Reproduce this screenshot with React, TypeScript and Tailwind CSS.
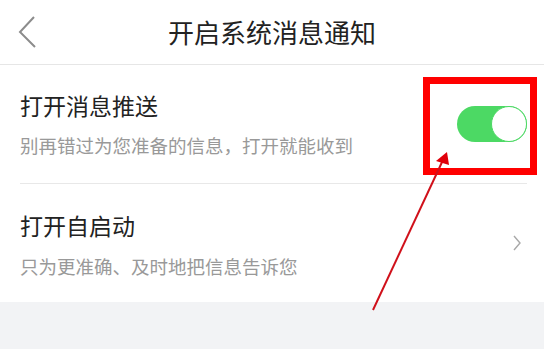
import React from 'react'

const font = "font-['Noto_Sans_CJK_SC','Noto_Sans',sans-serif]"

function Toggle() {
  return (
    <div className="flex h-[36px] w-[70px] justify-end rounded-full bg-[#4cd964]">
      <div className="h-[36px] w-[36px] rounded-full border-[1.5px] border-[#4cd964] bg-white" />
    </div>
  )
}

function ChevronRight() {
  return (
    <svg width="8" height="16" viewBox="0 0 8 16" fill="none">
      <path d="M1 1 L7 8 L1 15" stroke="#a8a8a8" strokeWidth="1.4" />
    </svg>
  )
}

export default function App() {
  return (
    <div className={`relative min-h-screen w-full bg-[#f2f3f5] ${font}`}>
      <div className="bg-white">
        <div className="relative flex h-[65px] items-center justify-center border-b border-[#e6e6e6]">
          <svg className="absolute left-[17px] top-[15px]" width="22" height="34" viewBox="0 0 22 34" fill="none">
            <path d="M17 2 L3 17 L18 32" stroke="#8c8c8c" strokeWidth="2" />
          </svg>
          <h1 className="text-[26px] leading-[32px] text-[#222]">开启系统消息通知</h1>
        </div>

        <div className="ml-5 mr-[17px] flex items-center justify-between border-b border-[#e8e8e8]">
          <div className="flex flex-col gap-[13px] pt-[25px] pb-[26px]">
            <div className="text-[23px] leading-[30px] text-[#222]">打开消息推送</div>
            <div className="text-[18.5px] leading-[24px] text-[#999]">别再错过为您准备的信息，打开就能收到</div>
          </div>
          <Toggle />
        </div>

        <div className="flex items-center justify-between pl-5 pr-[23px]">
          <div className="flex flex-col gap-[14px] pt-[26px] pb-[24px]">
            <div className="text-[23px] leading-[30px] text-[#222]">打开自启动</div>
            <div className="text-[18.5px] leading-[24px] text-[#999]">只为更准确、及时地把信息告诉您</div>
          </div>
          <ChevronRight />
        </div>
      </div>

      <div className="pointer-events-none absolute left-[423px] top-[77px] h-[98px] w-[114px] border-[7px] border-[#ff0000]" />
      <svg className="pointer-events-none absolute left-0 top-0" width="544" height="349" viewBox="0 0 544 349">
        <line x1="373" y1="310" x2="443" y2="160" stroke="#d0101a" strokeWidth="2" />
        <polygon points="447,152 436,161 449,165" fill="#e0000a" />
      </svg>
    </div>
  )
}
